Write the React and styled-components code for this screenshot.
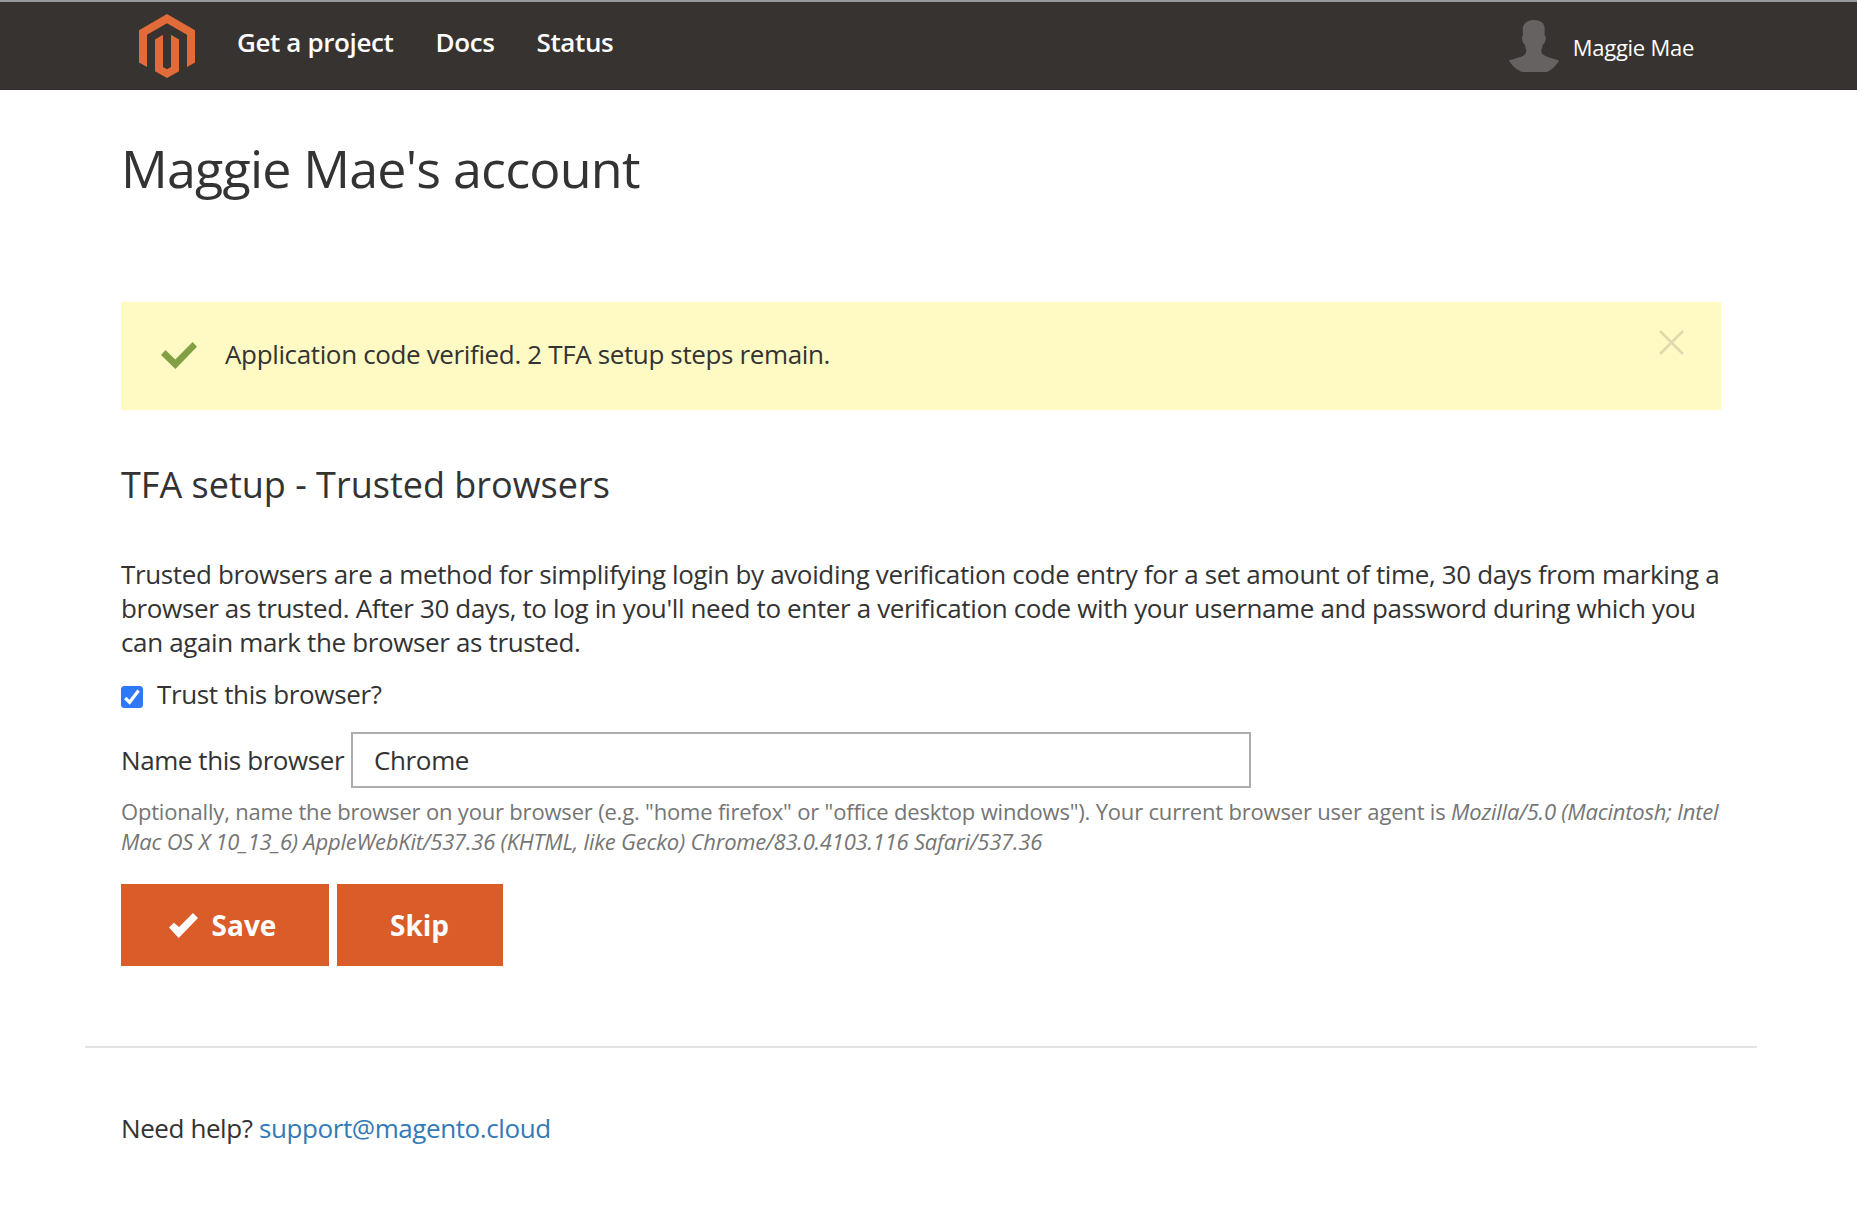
import React, { useState } from "react";
import styled, { createGlobalStyle } from "styled-components";

const GlobalStyle = createGlobalStyle`
  *, *::before, *::after { box-sizing: border-box; }
  body {
    margin: 0;
    background: #fff;
    color: #333;
    font-family: "Open Sans", "Noto Sans", sans-serif;
    font-size: 26px;
    line-height: 34px;
    letter-spacing: -0.36px;
  }
  h1, h2, p { margin: 0; font-weight: 400; }
`;

const Page = styled.div`
  height: 1208px;
  overflow: hidden;
`;

const Header = styled.header`
  display: flex;
  justify-content: space-between;
  height: 90px;
  padding: 0 163px 0 139px;
  background: #373330;
  border-top: 2px solid #96989a;
  border-bottom: 1px solid #332a2b;
`;

const HeaderGroup = styled.div`
  display: flex;
  align-items: flex-start;
`;

const Logo = styled.svg`
  width: 56px;
  height: 64px;
  margin: 12px 41px 0 0;
  fill: #e26c39;
`;

const Nav = styled.nav`
  display: flex;
  gap: 42px;
  padding: 23px 0 0 1px;
`;

const NavLink = styled.a`
  color: #fff;
  font-weight: 600;
  letter-spacing: -0.38px;
  text-decoration: none;
  white-space: nowrap;
`;

const Avatar = styled.svg`
  width: 50px;
  height: 52px;
  margin: 18px 14px 0 0;
  fill: #666261;
`;

const UserName = styled.span`
  margin-top: 28px;
  color: #fff;
  font-size: 22px;
  font-weight: 500;
  letter-spacing: -0.26px;
  white-space: nowrap;
`;

const Main = styled.main`
  width: 1600px;
  margin: 48px 0 0 121px;
`;

const Title = styled.h1`
  font-size: 52px;
  line-height: 60px;
  letter-spacing: -0.81px;
`;

const Alert = styled.div`
  display: flex;
  align-items: flex-start;
  height: 108px;
  margin-top: 104px;
  padding: 28px 37px 0 40px;
  background: #fffac4;
`;

const AlertIcon = styled.svg`
  width: 36px;
  height: 27px;
  margin: 12px 28px 0 0;
  fill: #81a144;
`;

const AlertText = styled.p`
  flex: 1;
  margin-top: 7px;
`;

const CloseButton = styled.button`
  display: flex;
  padding: 0;
  border: 0;
  background: none;
  cursor: pointer;

  svg {
    width: 25px;
    height: 25px;
    stroke: #dedaae;
    stroke-width: 2.6;
  }
`;

const SectionTitle = styled.h2`
  margin-top: 55px;
  font-size: 36px;
  line-height: 40px;
  letter-spacing: 0;
`;

const Intro = styled.p`
  margin-top: 52px;
  white-space: nowrap;
`;

const CheckLabel = styled.label`
  display: flex;
  gap: 14px;
  margin-top: 18px;
`;

const Checkbox = styled.input`
  appearance: none;
  display: grid;
  width: 22px;
  height: 22px;
  margin: 9px 0 0;
  border: 1px solid #767676;
  border-radius: 3px;

  &:checked {
    border-color: #2f78f6;
    background: #2f78f6;
  }
`;

const CheckSlot = styled.span`
  display: grid;
  height: 31px;

  > * { grid-area: 1 / 1; }

  svg {
    width: 22px;
    height: 22px;
    margin-top: 9px;
    fill: none;
    stroke: #fff;
    stroke-width: 3.2;
    pointer-events: none;
  }
`;

const Field = styled.div`
  display: flex;
  justify-content: space-between;
  width: 1130px;
  margin-top: 21px;
`;

const FieldLabel = styled.label`
  margin-top: 11px;
  letter-spacing: -0.42px;
  white-space: nowrap;
`;

const TextInput = styled.input`
  width: 900px;
  height: 56px;
  padding: 0 21px;
  border: 2px solid #adadad;
  background: #fff;
  color: #333;
  font: inherit;
  letter-spacing: inherit;
  outline: 0;
`;

const Hint = styled.p`
  margin-top: 8px;
  color: #757575;
  font-size: 22px;
  line-height: 30px;
  letter-spacing: -0.185px;
  white-space: nowrap;

  em { letter-spacing: -0.215px; }
`;

const Actions = styled.div`
  display: flex;
  gap: 8px;
  margin-top: 28px;
`;

const Button = styled.button`
  display: flex;
  align-items: center;
  justify-content: center;
  gap: 14px;
  width: ${(p) => p.$width}px;
  height: 82px;
  padding: 0 ${(p) => p.$inset}px 0 0;
  border: 0;
  background: #da5c29;
  color: #fff;
  font: 700 28px/38px "Open Sans", "Noto Sans", sans-serif;
  letter-spacing: 0;
  cursor: pointer;

  svg {
    width: 29px;
    height: 25px;
    fill: #fff;
  }
`;

const Footer = styled.footer`
  width: 1672px;
  margin: 80px 0 0 85px;
  padding: 63px 36px 0;
  border-top: 2px solid #e3e3e3;
  letter-spacing: -0.41px;

  a {
    color: #337ab7;
    text-decoration: none;
  }
`;

export default function App() {
  const [trusted, setTrusted] = useState(true);
  const [name, setName] = useState("Chrome");

  return (
    <Page>
      <GlobalStyle />
      <Header>
        <HeaderGroup>
          <Logo viewBox="0 0 56 64">
            <path d="M28 0 56 16.2V48.4L48 53V20.8L28 9.3 8 20.8V53L0 48.4V16.2Z" />
            <path d="M16 25.4 24 20.7V53L28 55.2 32 53V20.7L40 25.4V57.3L28 64 16 57.3Z" />
          </Logo>
          <Nav>
            <NavLink href="#project">Get a project</NavLink>
            <NavLink href="#docs">Docs</NavLink>
            <NavLink href="#status">Status</NavLink>
          </Nav>
        </HeaderGroup>
        <HeaderGroup>
          <Avatar viewBox="0 0 50 52">
            <path d="M24.7 0C31 0 35.5 2.7 35.7 8.5L35.6 15.7C37.2 16.5 37 18 36.4 20.4 35.9 22.6 35.2 23.8 34 24.3 33.6 27 32.6 28.8 32.2 30.5 32 34.5 36 36 41 37.7L50 40.6C47.5 45 44 49 39.5 51.3Q38.5 52 37 52H14Q12.5 52 11.3 51.3C6 48.5 2.5 45 0 40.6L10.3 37.2C14.8 35.7 17.5 34 17.3 30.5 16.8 28.5 16 27 15.7 24.3 14.3 23.8 13.8 22.5 13.4 20.4 12.9 18 12.8 16.5 14 15.7L13.7 8.5C14.2 3.5 18.4 0 24.7 0Z" />
          </Avatar>
          <UserName>Maggie Mae</UserName>
        </HeaderGroup>
      </Header>
      <Main>
        <Title>Maggie Mae's account</Title>
        <Alert role="status">
          <AlertIcon viewBox="0 0 36 27">
            <path d="M0 13 4.5 8 14.3 17.6 31.6 0 36 4.7 14.4 27Z" />
          </AlertIcon>
          <AlertText>Application code verified. 2 TFA setup steps remain.</AlertText>
          <CloseButton aria-label="Close">
            <svg viewBox="0 0 25 25">
              <path d="M1 1 24 24M24 1 1 24" />
            </svg>
          </CloseButton>
        </Alert>
        <SectionTitle>TFA setup - Trusted browsers</SectionTitle>
        <Intro>
          Trusted browsers are a method for simplifying login by avoiding verification code entry
          for a set amount of time, 30 days from marking a<br />
          browser as trusted. After 30 days, to log in you'll need to enter a verification code with
          your username and password during which you<br />
          can again mark the browser as trusted.
        </Intro>
        <CheckLabel>
          <CheckSlot>
            <Checkbox
              type="checkbox"
              checked={trusted}
              onChange={(e) => setTrusted(e.target.checked)}
            />
            {trusted && (
              <svg viewBox="0 0 22 22">
                <path d="M4.2 12 8.6 16.3 17.6 4.6" />
              </svg>
            )}
          </CheckSlot>
          Trust this browser?
        </CheckLabel>
        <Field>
          <FieldLabel htmlFor="browser-name">Name this browser</FieldLabel>
          <TextInput
            id="browser-name"
            value={name}
            onChange={(e) => setName(e.target.value)}
          />
        </Field>
        <Hint>
          Optionally, name the browser on your browser (e.g. "home firefox" or "office desktop
          windows"). Your current browser user agent is <em>Mozilla/5.0 (Macintosh; Intel<br />
          Mac OS X 10_13_6) AppleWebKit/537.36 (KHTML, like Gecko) Chrome/83.0.4103.116
          Safari/537.36</em>
        </Hint>
        <Actions>
          <Button $width={208} $inset={5}>
            <svg viewBox="0 0 29 25">
              <path d="M0 14.5 4.8 9.8 10 14 24 0 29 5 9.7 25Z" />
            </svg>
            Save
          </Button>
          <Button $width={166} $inset={1}>Skip</Button>
        </Actions>
      </Main>
      <Footer>
        Need help? <a href="mailto:support@magento.cloud">support@magento.cloud</a>
      </Footer>
    </Page>
  );
}
